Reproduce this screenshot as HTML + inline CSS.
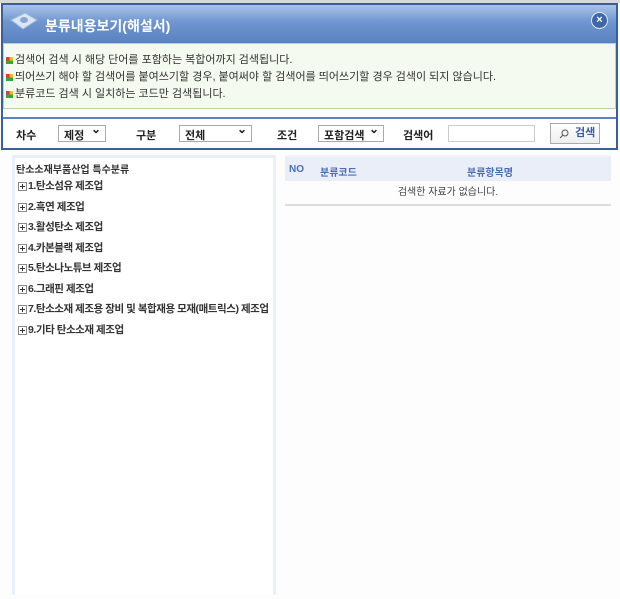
<!DOCTYPE html>
<html><head><meta charset="utf-8"><style>
*{margin:0;padding:0;box-sizing:border-box}
body{width:620px;height:599px;background:#fdfdfd;font-family:"Liberation Sans","Noto Sans CJK KR",sans-serif;position:relative;overflow:hidden;font-size:11px;color:#333}
.top{position:absolute;left:0;top:0;width:620px;height:3px;background:#d8d8d8}
.dlg{position:absolute;left:1px;top:3px;width:617px;height:147px;background:#3b5f99;}
.hd{position:absolute;left:2px;top:2px;right:2px;height:38px;background:linear-gradient(#a9c3e8,#6e95cf 45%,#5a82bf)}
.hd .t{position:absolute;left:42px;top:11px;color:#fff;font-weight:bold;font-size:14px}
.x{position:absolute;right:8px;top:7px;width:17px;height:17px;border-radius:50%;background:#3f68a8;border:1px solid #e0e8f4;color:#fff;font-size:11px;font-weight:bold;text-align:center;line-height:15px}
.nt{position:absolute;left:2px;top:40px;right:2px;height:66px;background:#f4faef;border:1px solid #b6d7a6}
.nt p{font-size:11px;color:#333;height:17px;line-height:17px;padding-left:11px;position:relative}
.nt p:before{content:"";position:absolute;left:2px;top:5px;width:7px;height:7px;background:linear-gradient(90deg,#e33 50%,#fb2 50%);box-shadow:inset 0 -3.5px 0 #3a3}
.sb{position:absolute;left:2px;top:106px;right:2px;height:39px;background:#fff}
.sb:before{content:"";position:absolute;left:0;right:0;top:8px;height:2px;background:#5b82c4}
.lb{position:absolute;top:18px;font-weight:bold;font-size:11px;color:#222}
.sel{position:absolute;top:16px;height:17px;border:1px solid #aaa;background:#fff;font-size:11px;font-weight:bold;padding:1px 5px;color:#222}
.sel:after{content:"⌄";position:absolute;right:4px;top:-4px;font-size:12px}
.lp{position:absolute;left:12px;top:155px;width:264px;height:440px;border:3px solid #eaf0fa;border-bottom:none;background:#fff}
.lp .h{font-weight:bold;font-size:10px;margin:3px 0 0 1px;color:#333}
.lp .i{position:relative;height:20.5px;padding-left:13px;font-size:10.5px;font-weight:bold;color:#333;line-height:20px;white-space:nowrap;letter-spacing:-0.45px}
.lp .i:before{content:"";position:absolute;left:3px;top:6px;width:7px;height:7px;border:1px solid #888;background:linear-gradient(#333,#333) center/5px 1px no-repeat,linear-gradient(#333,#333) center/1px 5px no-repeat,#fff}
.rp{position:absolute;left:285px;top:155px;width:326px}
.rh{height:26px;background:#e9eef9;border-top:2px solid #f1f4fa;color:#4a6fb0;font-weight:bold;font-size:10px;position:relative}
.rh span{position:absolute;top:7px}
.rr{height:25px;border-bottom:2px solid #ddd;text-align:center;line-height:24px;font-size:10px;color:#444}
</style></head><body>
<div class="top"></div>
<div class="dlg">
 <div class="hd">
  <svg style="position:absolute;left:6px;top:6px" width="30" height="22" viewBox="0 0 30 22"><path d="M2 9 L16 2 L28 9 L14 18 Z" fill="#d9e6f6" stroke="#9fb7da"/><ellipse cx="15" cy="9" rx="4" ry="3" fill="#8aa6d0"/></svg>
  <div class="t">분류내용보기(해설서)</div>
  <div class="x">×</div>
 </div>
 <div class="nt" style="padding-top:8px">
  <p>검색어 검색 시 해당 단어를 포함하는 복합어까지 검색됩니다.</p>
  <p>띄어쓰기 해야 할 검색어를 붙여쓰기할 경우, 붙여써야 할 검색어를 띄어쓰기할 경우 검색이 되지 않습니다.</p>
  <p>분류코드 검색 시 일치하는 코드만 검색됩니다.</p>
 </div>
 <div class="sb">
  <span class="lb" style="left:13px">차수</span>
  <div class="sel" style="left:55px;width:48px">제정</div>
  <span class="lb" style="left:133px">구분</span>
  <div class="sel" style="left:176px;width:73px">전체</div>
  <span class="lb" style="left:274px">조건</span>
  <div class="sel" style="left:315px;width:66px">포함검색</div>
  <span class="lb" style="left:400px">검색어</span>
  <div style="position:absolute;left:445px;top:16px;width:87px;height:17px;border:1px solid #ccc;background:#fff"></div>
  <div style="position:absolute;left:547px;top:14px;width:50px;height:21px;border:1px solid #aaa;background:linear-gradient(#fff,#eee);font-size:11px;font-weight:bold;color:#3a5fa0;line-height:19px;padding-left:24px">검색<svg style="position:absolute;left:8px;top:5px" width="10" height="10" viewBox="0 0 10 10"><circle cx="6" cy="4" r="3" fill="none" stroke="#555"/><path d="M4 6 L1 9" stroke="#555"/></svg></div>
 </div>
</div>
<div class="lp">
 <div class="h">탄소소재부품산업 특수분류</div>
 <div class="i">1.탄소섬유 제조업</div>
 <div class="i">2.흑연 제조업</div>
 <div class="i">3.활성탄소 제조업</div>
 <div class="i">4.카본블랙 제조업</div>
 <div class="i">5.탄소나노튜브 제조업</div>
 <div class="i">6.그래핀 제조업</div>
 <div class="i">7.탄소소재 제조용 장비 및 복합재용 모재(매트릭스) 제조업</div>
 <div class="i">9.기타 탄소소재 제조업</div>
</div>
<div class="rp">
 <div class="rh"><span style="left:4px">NO</span><span style="left:35px">분류코드</span><span style="left:182px">분류항목명</span></div>
 <div class="rr">검색한 자료가 없습니다.</div>
</div>
</body></html>
